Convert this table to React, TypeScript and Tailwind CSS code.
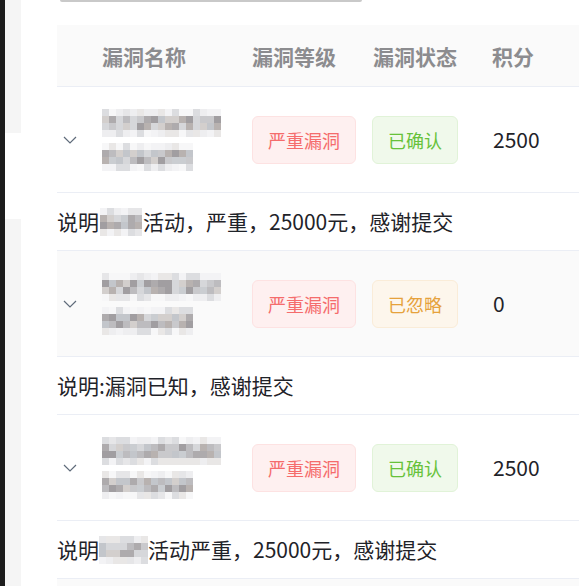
import React from "react";

const MID = ["#c9c9cc", "#bdbcbf", "#aeabad", "#a19ea1", "#c3c6cb", "#d3cfcd", "#b8b2b0", "#d6d7da", "#cacdd1"];
const LIGHT = ["#e6e6e8", "#eeeef0", "#f3f3f5", "#dcdde0", "#e9e7e6", "#f7f7f8"];

function rand(seed: number) {
  let s = seed;
  return () => {
    s = (s * 9301 + 49297) % 233280;
    return s / 233280;
  };
}

function Mosaic({ cols, rows, seed, cell = 7 }: { cols: number; rows: number; seed: number; cell?: number }) {
  const r = rand(seed);
  const cells: string[] = [];
  for (let y = 0; y < rows; y++) {
    for (let x = 0; x < cols; x++) {
      const edge = y === 0 || y === rows - 1;
      const pal = edge ? LIGHT : MID;
      cells.push(pal[Math.floor(r() * pal.length)]);
    }
  }
  return (
    <div
      className="grid"
      style={{ gridTemplateColumns: `repeat(${cols}, ${cell}px)`, gridAutoRows: `${cell}px` }}
    >
      {cells.map((c, i) => (
        <div key={i} style={{ backgroundColor: c }} />
      ))}
    </div>
  );
}

function Chevron() {
  return (
    <svg width="14" height="8" viewBox="0 0 14 8" fill="none">
      <polyline points="1,1 7,7 13,1" stroke="#5f6b7a" strokeWidth="1.2" fill="none" />
    </svg>
  );
}

type TagKind = "danger" | "success" | "warning";
const tagCls: Record<TagKind, string> = {
  danger: "bg-[#fef0f0] border-[#fde2e2] text-[#f56c6c]",
  success: "bg-[#f0f9eb] border-[#e1f3d8] text-[#67c23a]",
  warning: "bg-[#fdf6ec] border-[#faecd8] text-[#e6a23c]",
};

function Tag({ kind, children }: { kind: TagKind; children: React.ReactNode }) {
  return (
    <span
      className={`inline-flex items-center h-[48px] px-[15px] border rounded-[6px] text-[18px] leading-none ${tagCls[kind]}`}
    >
      {children}
    </span>
  );
}

const font = { fontFamily: '"Noto Sans CJK SC", "Noto Sans", sans-serif' };

function DataRow({
  seed,
  status,
  statusKind,
  score,
  hover,
}: {
  seed: number;
  status: string;
  statusKind: TagKind;
  score: string;
  hover?: boolean;
}) {
  return (
    <div
      className={`grid grid-cols-[45px_150px_120px_120px_1fr] h-[106px] items-center border-b border-[#ebeef5] ${
        hover ? "bg-[#fafafa]" : "bg-white"
      }`}
    >
      <div className="pl-[6px] flex items-center">
        <Chevron />
      </div>
      <div className="flex flex-col gap-[6px] pl-[0px]">
        <Mosaic cols={17} rows={4} seed={seed} />
        <Mosaic cols={13} rows={4} seed={seed + 7} />
      </div>
      <div>
        <Tag kind="danger">严重漏洞</Tag>
      </div>
      <div>
        <Tag kind={statusKind}>{status}</Tag>
      </div>
      <div className="pl-[1px] text-[21px] text-[#1f2329]">{score}</div>
    </div>
  );
}

function ExplRow({ children }: { children: React.ReactNode }) {
  return (
    <div className="h-[58px] flex items-center border-b border-[#ebeef5] text-[21px] text-[#1f2329] whitespace-nowrap bg-white">
      {children}
    </div>
  );
}

export default function App() {
  return (
    <div className="w-[579px] h-[586px] overflow-hidden bg-white flex" style={font}>
      <div className="w-[5px] shrink-0 bg-[#1c1c1c]" />
      <div className="w-[16px] shrink-0 flex flex-col">
        <div className="h-[133px] bg-[#f5f5f5]" />
        <div className="h-[86px] bg-white" />
        <div className="flex-1 bg-[#f5f5f5]" />
      </div>
      <div className="w-[36px] shrink-0" />
      <div className="w-[560px] shrink-0 flex flex-col">
        <div className="h-[25px] shrink-0">
          <div className="ml-[3px] w-[302px] h-[2px] rounded-b-[2px] bg-[#c9c9c9]" />
        </div>
        <div className="grid grid-cols-[45px_150px_120px_120px_1fr] h-[62px] shrink-0 items-center bg-[#fafafa] border-b border-[#ebeef5] text-[21px] font-bold text-[#8c8c8f] pt-[3px]">
          <div />
          <div>漏洞名称</div>
          <div>漏洞等级</div>
          <div className="pl-[1px]">漏洞状态</div>
          <div>积分</div>
        </div>
        <DataRow seed={11} status="已确认" statusKind="success" score="2500" />
        <ExplRow>
          说明
          <span className="inline-block mx-[1px]">
            <Mosaic cols={6} rows={4} seed={31} />
          </span>
          活动，严重，25000元，感谢提交
        </ExplRow>
        <DataRow seed={47} status="已忽略" statusKind="warning" score="0" hover />
        <ExplRow>说明:漏洞已知，感谢提交</ExplRow>
        <DataRow seed={83} status="已确认" statusKind="success" score="2500" />
        <ExplRow>
          说明
          <span className="inline-block">
            <Mosaic cols={7} rows={4} seed={97} />
          </span>
          活动严重，25000元，感谢提交
        </ExplRow>
        <div className="flex-1 bg-[#fafafa]" />
      </div>
    </div>
  );
}
